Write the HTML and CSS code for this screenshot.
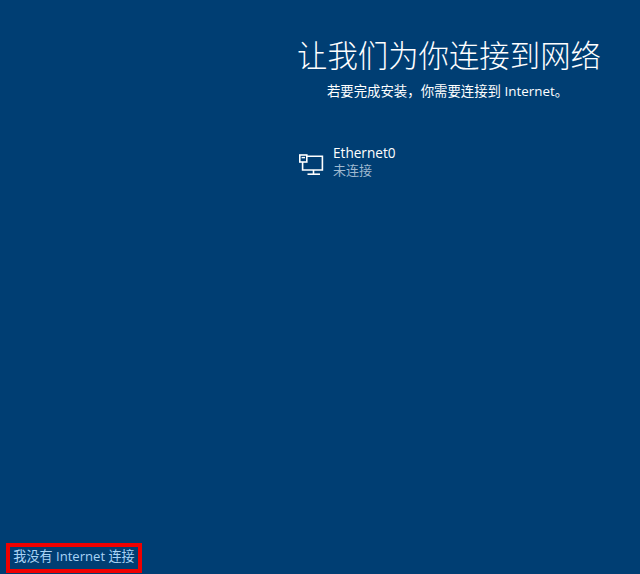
FILE: index.html
```html
<!DOCTYPE html>
<html lang="zh-CN">
<head>
    <meta charset="UTF-8">
    <meta name="viewport" content="width=device-width, initial-scale=1.0">
    <title>让我们为你连接到网络</title>
    <link rel="stylesheet" href="styles.css">
</head>
<body>
    <div class="page">
        <div class="main">
            <div class="setup">
                <h1>让我们为你连接到网络</h1>
                <p class="subtitle">若要完成安装，你需要连接到 Internet。</p>
                <div class="network">
                    <svg class="network-icon" width="26" height="24" viewBox="0 0 26 24" fill="none" stroke="#ffffff" stroke-width="1.6">
                        <path d="M8.6 3.2H24.4V17H4.6V9"/>
                        <rect x="1.8" y="2" width="7" height="7"/>
                        <path d="M3.6 4.6H7" stroke-width="1.4"/>
                        <path d="M15.5 17V21"/>
                        <path d="M9.5 21.2H22"/>
                    </svg>
                    <div class="network-text">
                        <div class="network-name">Ethernet0</div>
                        <div class="network-status">未连接</div>
                    </div>
                </div>
            </div>
        </div>
        <div class="footer">
            <a class="skip-link" href="#">我没有 Internet 连接</a>
        </div>
    </div>
</body>
</html>
```

FILE: styles.css
```css
html, body {
    height: 100%;
}
body {
    margin: 0;
    background: #003e73;
    color: #ffffff;
    font-family: "Open Sans", "Noto Sans CJK SC", sans-serif;
    overflow: hidden;
}
.page {
    display: flex;
    flex-direction: column;
    height: 574px;
}
.main {
    flex: 1;
    display: flex;
    justify-content: flex-end;
    padding-right: 38px;
}
.setup {
    width: 304px;
    padding-top: 36px;
}
h1 {
    margin: 0 2px 0 -1px;
    font-size: 30.4px;
    font-weight: 300;
    line-height: 40px;
    text-align: center;
    white-space: nowrap;
}
.subtitle {
    margin: 6px 5px 0 0;
    font-size: 13.4px;
    line-height: 18px;
    text-align: center;
    white-space: nowrap;
}
.network {
    display: flex;
    align-items: center;
    gap: 9px;
    margin-top: 44px;
}
.network-icon {
    flex: none;
    margin-top: 6px;
}
.network-name {
    font-size: 13.6px;
    line-height: 18px;
}
.network-status {
    margin-top: -1px;
    font-size: 13px;
    line-height: 18px;
    color: #9fb9d0;
}
.footer {
    display: flex;
    padding: 0 0 1px 6px;
}
.skip-link {
    box-sizing: border-box;
    width: 136px;
    height: 30px;
    border: 4px solid #f00000;
    color: #a9d3f5;
    font-size: 13.1px;
    line-height: 18px;
    text-align: center;
    text-decoration: none;
    white-space: nowrap;
}
```
